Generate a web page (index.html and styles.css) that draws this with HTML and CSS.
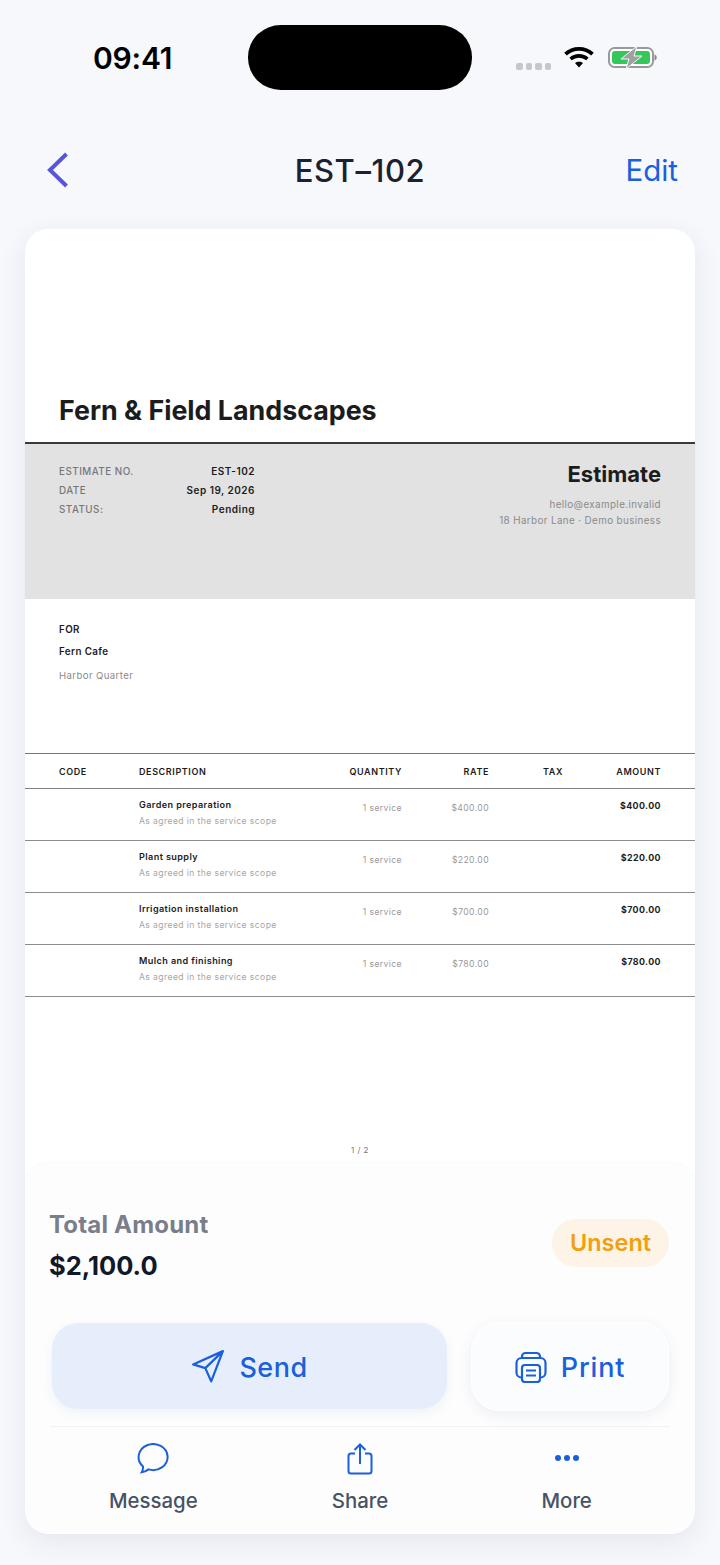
FILE: index.html
```html
<!DOCTYPE html>
<html lang="en">
<head>
<meta charset="utf-8">
<title>EST-102</title>
<link rel="stylesheet" href="styles.css">
</head>
<body>
<div class="screen">
  <header class="status">
    <div class="time">09:41</div>
    <div class="island"></div>
    <div class="status-icons">
      <div class="signal"><i></i><i></i><i></i><i></i></div>
      <svg class="wifi" viewBox="0 0 30 22" width="30" height="22">
        <path d="M1.500 8.200C9 1 21 1 28.500 8.200" fill="none" stroke="#000" stroke-width="3.800"/>
        <path d="M6.600 13C11.200 8.800 18.800 8.800 23.400 13" fill="none" stroke="#000" stroke-width="3.600"/>
        <path d="M11 17C13.300 15.200 16.700 15.200 19 17L15 21.600Z" fill="#000"/>
      </svg>
      <svg class="battery" viewBox="0 0 49 23" width="49" height="23">
        <rect x="1" y="2" width="44" height="19" rx="5.500" fill="#fff" stroke="#9a9a9a" stroke-width="2"/>
        <rect x="4" y="5" width="38" height="13" rx="3" fill="#34c759"/>
        <path d="M46.500 8.500c1.600.4 2.200 1.600 2.200 3s-.6 2.600-2.200 3z" fill="#8a8a8a"/>
        <path d="M29 0L13 13H21L18 23L34 10H26Z" fill="#a0a0a0" stroke="#f6f8fc" stroke-width="1"/>
      </svg>
    </div>
  </header>

  <nav class="nav">
    <svg class="back" viewBox="0 0 22 36" width="22" height="36"><path d="M19.500 2L3 18L19.500 34" fill="none" stroke="#5856d6" stroke-width="4"/></svg>
    <h1 class="nav-title">EST–102</h1>
    <a class="nav-edit">Edit</a>
  </nav>

  <main class="card">
    <section class="doc">
      <h2 class="company">Fern &amp; Field Landscapes</h2>
      <div class="band">
        <dl class="meta">
          <dt>ESTIMATE NO.</dt><dd>EST-102</dd>
          <dt>DATE</dt><dd>Sep 19, 2026</dd>
          <dt>STATUS:</dt><dd>Pending</dd>
        </dl>
        <div class="issuer">
          <div class="issuer-title">Estimate</div>
          <div class="issuer-line">hello@example.invalid</div>
          <div class="issuer-line">18 Harbor Lane · Demo business</div>
        </div>
      </div>
      <div class="bill">
        <div class="bill-label">FOR</div>
        <div class="bill-name">Fern Cafe</div>
        <div class="bill-area">Harbor Quarter</div>
      </div>
      <div class="table">
        <div class="row head">
          <div>CODE</div><div>DESCRIPTION</div><div class="r">QUANTITY</div><div class="r">RATE</div><div class="r">TAX</div><div class="r">AMOUNT</div>
        </div>
        <div class="row item">
          <div></div>
          <div><div class="item-name">Garden preparation</div><div class="item-sub">As agreed in the service scope</div></div>
          <div class="r soft">1 service</div><div class="r soft">$400.00</div><div></div><div class="r amt">$400.00</div>
        </div>
        <div class="row item">
          <div></div>
          <div><div class="item-name">Plant supply</div><div class="item-sub">As agreed in the service scope</div></div>
          <div class="r soft">1 service</div><div class="r soft">$220.00</div><div></div><div class="r amt">$220.00</div>
        </div>
        <div class="row item">
          <div></div>
          <div><div class="item-name">Irrigation installation</div><div class="item-sub">As agreed in the service scope</div></div>
          <div class="r soft">1 service</div><div class="r soft">$700.00</div><div></div><div class="r amt">$700.00</div>
        </div>
        <div class="row item">
          <div></div>
          <div><div class="item-name">Mulch and finishing</div><div class="item-sub">As agreed in the service scope</div></div>
          <div class="r soft">1 service</div><div class="r soft">$780.00</div><div></div><div class="r amt">$780.00</div>
        </div>
      </div>
      <div class="page-no">1 / 2</div>
    </section>

    <section class="panel">
      <div class="summary">
        <div class="totals">
          <div class="total-label">Total Amount</div>
          <div class="total-value">$2,100.0</div>
        </div>
        <div class="pill">Unsent</div>
      </div>
      <div class="actions">
        <button class="btn send">
          <svg viewBox="0 0 32 32" width="34" height="34"><path d="M30 2L2 14.500L13.500 18L19 30.500ZM30 2L13.500 18" fill="none" stroke="#1a5fdc" stroke-width="2.100" stroke-linejoin="round"/></svg>
          <span>Send</span>
        </button>
        <button class="btn print">
          <svg viewBox="0 0 32 32" width="32" height="32">
            <path d="M7 7V5.500A3.500 3.500 0 0 1 10.500 2H21.500A3.500 3.500 0 0 1 25 5.500V7" fill="none" stroke="#1a5fdc" stroke-width="2.200"/>
            <rect x="1.500" y="7" width="29" height="19.500" rx="5" fill="none" stroke="#1a5fdc" stroke-width="2.200"/>
            <rect x="7" y="14" width="18" height="17" rx="3" fill="#fbfcfd" stroke="#1a5fdc" stroke-width="2.200"/>
            <path d="M11 19.500H21M11 24.500H21" stroke="#1a5fdc" stroke-width="2"/>
          </svg>
          <span>Print</span>
        </button>
      </div>
      <div class="tabs">
        <div class="tab">
          <svg viewBox="0 0 32 32" width="32" height="32"><path d="M6 23.400A14.500 13 0 1 1 11.500 26.400C9.500 28 6.500 29.200 4.700 29.300C5.700 27.800 6.100 25.400 6 23.400Z" fill="none" stroke="#1a5fdc" stroke-width="2"/></svg>
          <span>Message</span>
        </div>
        <div class="tab">
          <svg viewBox="0 0 26 32" width="26" height="32"><path d="M8 10.500H4A2.500 2.500 0 0 0 1.500 13V28A2.500 2.500 0 0 0 4 30.500H22A2.500 2.500 0 0 0 24.500 28V13A2.500 2.500 0 0 0 22 10.500H18M13 21V1.500M7.500 7L13 1.500L18.500 7" fill="none" stroke="#1a5fdc" stroke-width="2"/></svg>
          <span>Share</span>
        </div>
        <div class="tab">
          <svg viewBox="0 0 26 32" width="26" height="32"><circle cx="4" cy="15" r="3" fill="#1a5fdc"/><circle cx="13" cy="15" r="3" fill="#1a5fdc"/><circle cx="22" cy="15" r="3" fill="#1a5fdc"/></svg>
          <span>More</span>
        </div>
      </div>
    </section>
  </main>
</div>
</body>
</html>
```

FILE: styles.css
```css
* { box-sizing: border-box; margin: 0; padding: 0; }

html, body {
  width: 720px;
  height: 1565px;
  overflow: hidden;
  background: #f6f8fc;
}

body { font-family: Inter, "Liberation Sans", sans-serif; color: #111827; }

.screen { width: 720px; height: 1565px; padding: 25px 25px 0; }

/* Status bar */
.status {
  display: grid;
  grid-template-columns: 1fr 224px 1fr;
  height: 65px;
  margin: 0 -25px;
}
.time {
  font-size: 30px;
  font-weight: 600;
  line-height: 36px;
  letter-spacing: -.2px;
  margin: 15px 0 0 93px;
  color: #000;
}
.island { background: #000; border-radius: 33px / 32px; }
.status-icons { display: flex; align-items: flex-start; padding: 21px 0 0 44px; }
.signal { display: flex; gap: 3px; margin: 17px 13px 0 0; }
.signal i { width: 6.500px; height: 6.500px; border-radius: 2px; background: #c6c7c9; }
.wifi { display: block; margin-right: 14px; }
.battery { display: block; }

/* Navigation */
.nav {
  display: grid;
  grid-template-columns: 1fr auto 1fr;
  align-items: center;
  height: 110px;
  margin-top: 25px;
  padding: 0 17px;
}
.back { display: block; margin-left: 5px; }
.nav-title { font-size: 31px; letter-spacing: .6px; font-weight: 500; color: #1a2130; line-height: 36px; margin-top: 1px; }
.nav-edit { justify-self: end; font-size: 29.500px; line-height: 32px; color: #1a5fdc; }

/* Card */
.card {
  margin-top: 4px;
  height: 1305px;
  border-radius: 24px;
  background: #fff;
  overflow: hidden;
  box-shadow: 0 8px 28px rgba(40, 50, 90, .09);
  display: flex;
  flex-direction: column;
}

.doc { height: 934px; background: #fff; color: #1c1c1c; }

.company {
  height: 215px;
  padding: 164px 34px 0;
  font-size: 26.800px;
  line-height: 34px;
  font-weight: 700;
  border-bottom: 2px solid #3a3a3a;
}

.band {
  height: 155px;
  background: #e2e2e2;
  display: flex;
  justify-content: space-between;
  padding: 18px 34px 0;
}
.meta {
  width: 196px;
  display: grid;
  grid-template-columns: 1fr auto;
  grid-auto-rows: 19px;
  line-height: 19px;
  letter-spacing: .5px;
}
.meta dt { font-size: 9.800px; color: #777; font-weight: 500; }
.meta dd { font-size: 10px; font-weight: 600; text-align: right; color: #1c1c1c; }

.issuer { text-align: right; margin-top: -1px; }
.issuer-title { font-size: 22px; line-height: 26px; font-weight: 700; margin-bottom: 10px; }
.issuer-line { font-size: 9.800px; line-height: 16px; color: #8a8a8a; letter-spacing: .4px; }

.bill { height: 154px; padding: 22px 34px 0; font-size: 9.800px; letter-spacing: .4px; }
.bill-label { font-weight: 600; line-height: 18px; color: #222; }
.bill-name { font-weight: 600; line-height: 18px; margin-top: 4px; }
.bill-area { font-size: 9.600px; color: #8a8a8a; line-height: 18px; margin-top: 6px; }

.table { border-top: 1px solid #777; }
.row {
  display: grid;
  grid-template-columns: 80px 180px 83px 87px 74px 98px;
  padding: 0 34px;
  letter-spacing: .4px;
}
.r { text-align: right; }
.head {
  height: 35px;
  align-items: center;
  font-weight: 600;
  font-size: 9px;
  letter-spacing: .6px;
  border-bottom: 1px solid #808080;
}
.item { height: 52px; padding-top: 7.500px; border-bottom: 1px solid #8c8c8c; line-height: 16px; }
.item-name { font-weight: 600; font-size: 9.100px; }
.item-sub { font-size: 8.600px; color: #a6a6a6; }
.soft { color: #999; padding-top: 3.500px; font-size: 8.600px; }
.amt { font-weight: 700; font-size: 8.900px; padding-top: 1.500px; }
.page-no { margin-top: 147px; text-align: center; font-size: 8px; line-height: 12px; color: #777; letter-spacing: .5px; }

/* Bottom panel */
.panel {
  flex: 1;
  background: #fdfdfe;
  border-radius: 24px 24px 0 0;
  box-shadow: 0 -1px 3px rgba(40, 50, 90, .03);
  padding: 45px 25px 0;
  display: flex;
  flex-direction: column;
}
.summary { display: flex; justify-content: space-between; align-items: flex-start; height: 114px; }
.totals { margin-left: -1px; }
.total-label { font-size: 24px; line-height: 34px; font-weight: 700; color: #7a7d8a; letter-spacing: .2px; }
.total-value { font-size: 25.500px; line-height: 34px; font-weight: 700; color: #111827; margin-top: 7px; }
.pill {
  margin: 11px 1px 0 0;
  width: 117px;
  height: 48px;
  border-radius: 24px;
  background: #fdf3e6;
  color: #f29f0f;
  font-size: 23.500px;
  font-weight: 600;
  line-height: 48px;
  text-align: center;
}
.actions { display: flex; justify-content: space-between; align-items: center; height: 89px; padding: 0 1px 0 2px; }
.btn {
  display: flex;
  align-items: center;
  justify-content: center;
  border: 0;
  font-family: inherit;
  font-size: 27px;
  font-weight: 500;
  color: #1a5fdc;
  letter-spacing: .5px;
}
.send {
  width: 395px;
  height: 86px;
  gap: 14px;
  margin-bottom: 2px;
  border-radius: 26px;
  background: #e7eefb;
  box-shadow: 0 4px 12px rgba(40, 60, 120, .06);
}
.send span { margin-top: 3px; }
.print {
  width: 198px;
  height: 89px;
  gap: 14px;
  letter-spacing: .8px;
  border-radius: 28px;
  background: #fbfcfd;
  border: 1px solid #fff;
  box-shadow: 0 4px 14px rgba(40, 60, 120, .08);
}
.print span { margin-top: 2px; }
.tabs {
  margin-top: 15px;
  border-top: 1px solid #f1f2f4;
  display: grid;
  grid-template-columns: 1fr 1fr 1fr;
  padding-top: 16px;
}
.tab {
  display: flex;
  flex-direction: column;
  align-items: center;
  gap: 11px;
  font-size: 20.400px;
  line-height: 30px;
  font-weight: 500;
  color: #475264;
}
.tab svg { display: block; }
```
